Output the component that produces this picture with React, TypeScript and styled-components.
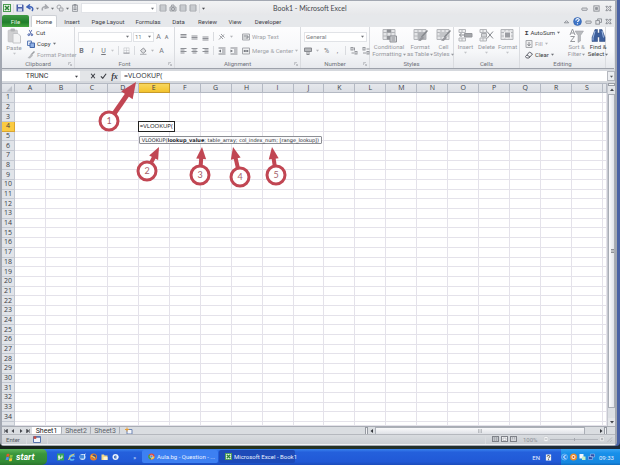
import React from "react";
import styled, { createGlobalStyle, css } from "styled-components";

const Global = createGlobalStyle`
  * { box-sizing: border-box; }
  html, body { margin: 0; height: 100%; }
  body { font-family: Roboto, "Noto Sans", sans-serif; font-size: 6px; color: #3f4147; overflow: hidden; }
  button, input, select { font: inherit; color: inherit; margin: 0; }
  button { background: none; border: 0; padding: 0; display: inline-flex; align-items: center; white-space: nowrap; }
  svg { display: block; flex: none; }
`;

const Desktop = styled.div`
  position: relative;
  height: 100vh;
  display: flex;
  flex-direction: column;
  background: linear-gradient(90deg, #15231a, #26331c 40%, #1c2a3c);
`;
const Window = styled.main`
  flex: 1;
  min-height: 0;
  margin-bottom: 3px;
  display: flex;
  flex-direction: column;
  background: #dfe2e6;
  border: solid #a3a8b2;
  border-width: 1px 2px 1px 2px;
  border-radius: 0 0 4px 4px;
  box-shadow: 3px 0 0 #4a62a4;
  margin-right: 3px;
`;
const TitleBar = styled.header`
  flex: none;
  height: 14px;
  display: grid;
  grid-template-columns: 210px 1fr 45px;
  align-items: center;
  background: linear-gradient(#f2f3f4, #e6e7ea);
`;
const QuickBar = styled.div`
  display: flex;
  align-items: center;
  gap: 2px;
  padding-left: 1px;
`;
const Title = styled.h1`
  margin: 0 0 0 61px;
  font-family: Lato, sans-serif;
  font-size: 7px;
  line-height: 12px;
  font-weight: 400;
  color: #45474c;
  white-space: nowrap;
`;
const Controls = styled.div<{ $gap: number }>`
  display: flex;
  align-items: center;
  justify-content: flex-end;
  gap: ${(p) => p.$gap}px;
  padding-right: 3px;
`;
const TabRow = styled.nav`
  flex: none;
  height: 12px;
  display: flex;
  align-items: stretch;
  background: #e6e8eb;
`;
const Tab = styled.button<{ $w: number; $kind?: "file" | "active" }>`
  width: ${(p) => p.$w}px;
  justify-content: center;
  color: #3f4147;
  ${(p) => p.$kind === "file" && css`
    color: #e8f6e4;
    background: linear-gradient(#3f9a45, #1f7d2b 60%, #43a63d);
    border-radius: 2px 2px 0 0;
  `}
  ${(p) => p.$kind === "active" && css`
    background: #fff;
    border: 1px solid #cdd0d5;
    border-bottom: 0;
    border-radius: 2px 2px 0 0;
    margin: 0 2px;
  `}
`;
const Spacer = styled.div`
  flex: 1;
`;
const Ribbon = styled.section`
  flex: none;
  height: 42px;
  display: flex;
  background: linear-gradient(#fdfdfe, #f6f7f9 60%, #e7e9ed);
  border-bottom: 1px solid #9da1aa;
  margin-right: 1px;
`;
const GroupBox = styled.section<{ $w: number }>`
  width: ${(p) => p.$w}px;
  flex: none;
  display: flex;
  flex-direction: column;
  border-right: 1px solid #dadce0;
`;
const GroupBody = styled.div<{ $pad: number }>`
  height: 33px;
  display: flex;
  align-items: center;
  padding: 0 ${(p) => p.$pad}px;
  gap: 4px;
`;
const GroupLabel = styled.footer`
  position: relative;
  height: 8px;
  line-height: 7px;
  text-align: center;
  color: #6f7279;
`;
const Launcher = styled.button`
  position: absolute;
  right: 2px;
  top: 2px;
`;
const Stack = styled.div`
  display: flex;
  flex-direction: column;
  gap: 4px;
`;
const Line = styled.div<{ $gap?: number }>`
  display: flex;
  align-items: center;
  height: 10px;
  gap: ${(p) => p.$gap ?? 4}px;
`;
const Command = styled.button<{ $off?: boolean }>`
  gap: 2px;
  height: 7px;
  line-height: 7px;
  color: ${(p) => (p.$off ? "#a0a2a7" : "#3a3c42")};
`;
const BigCommand = styled.button<{ $on?: boolean; $w: number }>`
  width: ${(p) => p.$w}px;
  height: 31px;
  flex: none;
  flex-direction: column;
  line-height: 6px;
  gap: 1px;
  color: ${(p) => (p.$on ? "#3a3c42" : "#96989e")};
`;
const MenuText = styled.span`
  display: inline-flex;
  align-items: center;
  gap: 1px;
`;
const Letter = styled.button<{ $look?: "b" | "i" | "u" }>`
  width: 7px;
  justify-content: center;
  color: #75777d;
  font-size: 7px;
  font-weight: ${(p) => (p.$look === "b" ? 700 : 400)};
  font-style: ${(p) => (p.$look === "i" ? "italic" : "normal")};
  text-decoration: ${(p) => (p.$look === "u" ? "underline" : "none")};
`;
const FxLetter = styled(Letter)`
  font-family: "Liberation Serif", serif;
  font-weight: 700;
  font-size: 8px;
  color: #33353b;
`;
const Combo = styled.div<{ $w: number }>`
  display: flex;
  align-items: center;
  width: ${(p) => p.$w}px;
  height: 10px;
  background: #fff;
  border: 1px solid #e1e3e7;
  padding-right: 2px;
  color: #7d7f85;
`;
const Pick = styled.select`
  appearance: none;
  flex: 1;
  min-width: 0;
  border: 0;
  padding: 0 1px;
  background: transparent;
  line-height: 8px;
`;
const Rule = styled.span`
  width: 1px;
  height: 9px;
  background: #d9dbdf;
`;
const FormulaBar = styled.div`
  flex: none;
  display: flex;
  height: 14px;
  padding: 2px 0;
  background: #d5d8dd;
`;
const NameBox = styled.input`
  width: 70px;
  border: 0;
  padding: 0;
  font-size: 7px;
  text-align: center;
  background: #fff;
  color: #35373c;
`;
const NameDrop = styled.button`
  width: 8px;
  justify-content: center;
  background: #fff;
`;
const FxButtons = styled.div`
  width: 41px;
  display: flex;
  align-items: center;
  justify-content: flex-end;
  gap: 4px;
  padding-right: 3px;
  background: #e3e5e8;
`;
const FormulaInput = styled.input`
  flex: 1;
  border: 0;
  padding: 0 3px;
  font-family: "Open Sans", sans-serif;
  font-size: 7px;
  line-height: 10px;
  background: #fff;
  color: #2b2d33;
`;
const ExpandButton = styled.button`
  width: 8px;
  justify-content: center;
  background: #eceef1;
  border: 1px solid #b5b8bf;
`;
const SheetArea = styled.div`
  flex: 1;
  min-height: 0;
  display: flex;
`;
const Grid = styled.table`
  flex: 1;
  min-width: 0;
  display: grid;
  grid-template-columns: 13px repeat(19, minmax(0, 1fr)) 4px;
  grid-template-rows: 10px repeat(34, minmax(0, 1fr)) 4px;
  background: #fff;
  thead, tbody, tr { display: contents; }
`;
const headCell = css`
  padding: 0;
  display: flex;
  align-items: center;
  justify-content: center;
  min-width: 0;
  min-height: 0;
  overflow: hidden;
  font-family: "Open Sans", sans-serif;
  font-size: 7px;
  font-weight: 400;
  line-height: 8px;
  color: #3b3e45;
`;
const ColHead = styled.th<{ $on?: boolean }>`
  ${headCell}
  background: ${(p) => (p.$on ? "linear-gradient(#f8d75e, #f3c32c)" : "linear-gradient(#e6e8ec, #dbdee4)")};
  border: solid ${(p) => (p.$on ? "#c69a2c" : "#b4b9c3")};
  border-width: 1px 1px 1px 0;
`;
const RowHead = styled.th<{ $on?: boolean }>`
  ${headCell}
  background: ${(p) => (p.$on ? "#fbcb41" : "#e1e4e9")};
  border: solid ${(p) => (p.$on ? "#d9a531" : "#c3c8d1")};
  border-width: 0 1px 1px 0;
`;
const Cell = styled.td`
  padding: 0;
  min-width: 0;
  min-height: 0;
  border: solid #e4e2ea;
  border-width: 0 1px 1px 0;
  position: relative;
`;
const EditBox = styled.div`
  position: absolute;
  z-index: 1;
  left: -1px;
  top: -1px;
  width: 37px;
  height: 11px;
  border: 1px solid #222;
  background: #fff;
  font-family: "Open Sans", sans-serif;
  font-size: 6px;
  line-height: 9px;
  padding-left: 1px;
  color: #111;
  white-space: nowrap;
`;
const Hint = styled.div`
  position: absolute;
  z-index: 1;
  left: 0;
  top: 14px;
  height: 8px;
  padding: 0 2px;
  border: 1px solid #8d8f95;
  border-radius: 1px;
  background: #fbfbfc;
  font-family: "DejaVu Sans", sans-serif;
  font-size: 5px;
  line-height: 6px;
  color: #24262c;
  white-space: nowrap;
`;
const VScroll = styled.div`
  width: 8px;
  flex: none;
  display: flex;
  flex-direction: column;
  background: #e4e6ea;
  border-left: 1px solid #c5c8cf;
`;
const Split = styled.div`
  height: 3px;
  border: 1px solid #9a9ea6;
  background: #f5f6f7;
`;
const ScrollButton = styled.button<{ $s: number }>`
  height: ${(p) => p.$s}px;
  min-width: 7px;
  justify-content: center;
`;
const VThumb = styled.div`
  flex: 1;
  display: grid;
  place-items: center;
  background: linear-gradient(90deg, #fbfbfd, #e3e5ec);
  border: 1px solid #a9adb6;
`;
const VTrack = styled.div`
  height: 10px;
  background: #dcdfe4;
`;
const BottomBar = styled.div`
  flex: none;
  height: 8px;
  display: grid;
  grid-template-columns: 362px 1fr;
  background: #dadde1;
  border-top: 1px solid #a9adb5;
`;
const SheetTabs = styled.nav`
  display: flex;
  align-items: stretch;
`;
const NavButtons = styled.div`
  width: 30px;
  display: flex;
  align-items: center;
  justify-content: space-around;
`;
const SheetTab = styled.button<{ $on?: boolean }>`
  width: ${(p) => (p.$on ? 30 : 29)}px;
  justify-content: center;
  font-size: 7px;
  line-height: 7px;
  color: ${(p) => (p.$on ? "#222" : "#60636a")};
  background: ${(p) => (p.$on ? "#fff" : "transparent")};
  border-right: 1px solid #a9adb5;
  border-radius: 0 0 3px 0;
`;
const NewTab = styled.button`
  width: 18px;
  justify-content: center;
`;
const HScroll = styled.div`
  display: flex;
  align-items: stretch;
  padding: 0 8px 0 1px;
`;
const HThumb = styled.div`
  flex: 1;
  display: grid;
  place-items: center;
  border: 1px solid #abafb7;
  background: linear-gradient(#fafafb, #dfe1e6);
`;
const HTrack = styled.div`
  width: 12px;
`;
const HSplit = styled.div`
  width: 3px;
  border: 1px solid #969aa2;
  background: #f2f3f5;
`;
const StatusBar = styled.footer`
  flex: none;
  height: 11px;
  display: flex;
  align-items: center;
  gap: 6px;
  padding: 0 2px 1px 4px;
  background: linear-gradient(#d9dce0, #c9cdd2);
  border-top: 1px solid #b5b8be;
  border-bottom: 1px solid #f2f3f4;
  color: #595c63;
`;
const Zoom = styled.input`
  appearance: none;
  width: 48px;
  height: 1px;
  background: #b4b7bd;
  &::-webkit-slider-thumb { appearance: none; width: 1px; height: 3px; background: #a4a7ae; }
`;
const ZoomRow = styled.div`
  display: flex;
  align-items: center;
  gap: 1px;
`;
const ViewRow = styled(ZoomRow)`
  gap: 2px;
`;
const Zooms = styled.span`
  width: 19px;
  color: #8d9096;
`;
const Taskbar = styled.nav`
  flex: none;
  height: 16px;
  display: flex;
  align-items: stretch;
  background: linear-gradient(#3a82ee, #2460dc 20%, #2159d6 80%, #1b4cba);
  color: #e8f0ff;
`;
const Start = styled.button`
  width: 47px;
  padding-left: 5px;
  gap: 2px;
  border-radius: 0 5px 5px 0;
  background: linear-gradient(#5cb55a, #3a963c 30%, #338b35 80%, #2a742c);
  color: #fff;
  font-size: 9px;
  line-height: 12px;
  font-weight: 700;
  font-style: italic;
`;
const Launch = styled.div`
  width: 95px;
  display: flex;
  align-items: center;
  gap: 4px;
  padding: 0 6px 0 10px;
`;
const Task = styled.button<{ $on?: boolean }>`
  width: 76px;
  margin: 1px 1px 2px 0;
  padding-left: 6px;
  gap: 2px;
  border-radius: 2px;
  background: ${(p) => (p.$on ? "#1d4ab8" : "#3d80f2")};
`;
const Lang = styled.div`
  display: flex;
  align-items: center;
  gap: 5px;
  padding-right: 9px;
`;
const Tray = styled.div`
  width: 59px;
  display: flex;
  align-items: center;
  gap: 2px;
  background: linear-gradient(#3aa6f4, #1890ea 25%, #1587e0 85%, #106dc0);
`;
const Clock = styled.time`
  margin-left: 2px;
`;
const Callouts = styled.svg`
  position: absolute;
  left: 0;
  top: 0;
  z-index: 3;
  pointer-events: none;
`;

type Draw = { w?: number; h?: number; box?: string; children: React.ReactNode };
const Svg = ({ w = 8, h = 8, box = "0 0 16 16", children }: Draw) => (
  <svg width={w} height={h} viewBox={box} fill="none" aria-hidden="true">{children}</svg>
);
const Arrow = ({ c = "#6d7076", dir = "down", s = 3 }: { c?: string; dir?: "down" | "up" | "left" | "right"; s?: number }) => {
  const d = { down: "M0 2h8L4 7z", up: "M0 6h8L4 1z", left: "M6 0v8L1 4z", right: "M2 0v8l5-4z" }[dir];
  return <Svg w={s} h={s} box="0 0 8 8"><path d={d} fill={c} /></Svg>;
};
const ExcelIcon = ({ s = 8 }: { s?: number }) => (
  <Svg w={s} h={s}>
    <rect x="1" y="1" width="14" height="14" fill="#e7f3e4" stroke="#4b9b50" strokeWidth="2" />
    <path d="M4 4l8 8M12 4l-8 8" stroke="#2c8436" strokeWidth="3" />
  </Svg>
);
const SaveIcon = () => (
  <Svg><path d="M1 1h13l1 1v13H1z" fill="#4b5fa8" /><rect x="4" y="1" width="8" height="5" fill="#e9edf8" /><rect x="4" y="9" width="8" height="6" fill="#c7cfe8" /></Svg>
);
const UndoIcon = ({ c = "#3f62b8", flip = false }: { c?: string; flip?: boolean }) => (
  <Svg><path d={flip ? "M3 13C1 7 6 4 11 6M8 1l6 6-7 2" : "M12 14C16 8 11 4 5 6M8 1L2 6l7 4"} stroke={c} strokeWidth="3" /></Svg>
);
const SheetIcon = ({ lines = false }: { lines?: boolean }) => (
  <Svg>
    <path d={lines ? "M2 2h12v12H2z" : "M3 2h10v13H3z"} fill="#dcdee1" stroke="#a3a6ab" strokeWidth="2" />
    <path d={lines ? "M2 6h12M2 10h12" : "M6 1h4v3H6zM5 8h6M5 11h6"} stroke="#8f9298" strokeWidth={lines ? 1 : 2} />
  </Svg>
);
const ShapesIcon = () => (
  <Svg><circle cx="6" cy="6" r="4" stroke="#a6a8ad" strokeWidth="2" /><path d="M7 8h7v6H7z" fill="#e0e2e5" stroke="#a6a8ad" strokeWidth="2" /></Svg>
);
const CameraIcon = () => (
  <Svg><path d="M2 6h12v8H2zM5 6V2h5v4" fill="#d9dbde" stroke="#a0a3a8" strokeWidth="2" /><circle cx="8" cy="10" r="3" stroke="#8f9298" strokeWidth="2" /></Svg>
);
const WinIcon = ({ kind }: { kind: "min" | "max" | "close" | "restore" | "up" }) => (
  <Svg w={7} h={7}>
    {kind === "min" && <rect x="2" y="7" width="12" height="5" rx="1" stroke="#85888f" strokeWidth="2" />}
    {kind === "max" && <><rect x="2" y="2" width="12" height="12" stroke="#85888f" strokeWidth="2" /><rect x="6" y="6" width="4" height="4" stroke="#85888f" strokeWidth="2" /></>}
    {kind === "close" && <path d="M2 3h4l2 3 2-3h4l-3 5 3 5h-4l-2-3-2 3H2l3-5z" stroke="#85888f" strokeWidth="2" />}
    {kind === "restore" && <><path d="M6 5V2h9v8h-4" stroke="#85888f" strokeWidth="2" /><rect x="2" y="6" width="8" height="8" stroke="#85888f" strokeWidth="2" /></>}
    {kind === "up" && <path d="M3 11l5-5 5 5z" stroke="#85888f" strokeWidth="2" />}
  </Svg>
);
const HelpIcon = () => (
  <Svg w={9} h={9}><circle cx="8" cy="8" r="7" fill="#3f76c8" stroke="#2b5aa8" /><path d="M5 6c0-4 6-4 6-1 0 2-3 2-3 4M8 11v2" stroke="#fff" strokeWidth="2" /></Svg>
);
const PasteIcon = () => (
  <Svg w={14} h={16} box="0 0 28 32"><rect x="2" y="4" width="19" height="24" rx="2" fill="#cfcfd1" stroke="#b9babd" /><rect x="7" y="1" width="9" height="6" rx="2" fill="#b2b3b6" /><path d="M12 11h10l5 5v14H12z" fill="#f3f3f4" stroke="#c3c4c7" strokeWidth="2" /></Svg>
);
const CutIcon = () => (
  <Svg w={7} h={8}><path d="M5 1l5 10M11 1L6 11" stroke="#5a6fae" strokeWidth="2" /><circle cx="4" cy="12" r="2" stroke="#3450a0" strokeWidth="2" /><circle cx="11" cy="12" r="2" stroke="#3450a0" strokeWidth="2" /></Svg>
);
const CopyIcon = () => (
  <Svg><path d="M1 2h8v9H1z" fill="#dfe8f7" stroke="#5f7fb8" strokeWidth="2" /><path d="M6 6h9v9H6z" fill="#8fb0e4" stroke="#4467a8" strokeWidth="2" /></Svg>
);
const BrushIcon = () => (
  <Svg><path d="M15 1L8 8" stroke="#9c9fa4" strokeWidth="3" /><path d="M9 6l3 3-6 6-5-1z" fill="#b5b7bb" /></Svg>
);
const LinesIcon = ({ rows, c = "#8e9096" }: { rows: number[][]; c?: string }) => (
  <Svg w={7} h={8} box="0 0 14 16">{rows.map((r, i) => <path key={i} d={`M${r[1]} ${r[0]}h${r[2]}`} stroke={c} strokeWidth="2" />)}</Svg>
);
const TableIcon = ({ kind }: { kind: string }) => (
  <Svg w={15} h={15} box="0 0 30 30">
    <path d="M2 3h24v20H2z" fill="#e4e5e7" stroke="#b4b6ba" strokeWidth="2" />
    <path d="M2 9h24M2 16h24M10 3v20M18 3v20" stroke="#b4b6ba" strokeWidth="2" />
    {kind === "cond" && <><path d="M10 3h8v6h-8zM10 16h8v7h-8z" fill="#8f9196" /><path d="M16 16h13v12H16z" fill="#d3d5d8" stroke="#8f9196" strokeWidth="2" /><path d="M19 20h7M19 24h7" stroke="#8f9196" strokeWidth="2" /></>}
    {kind === "table" && <><path d="M10 9h16v14H10z" fill="#b0b2b6" /><path d="M29 5L17 18" stroke="#85888d" strokeWidth="3" /><path d="M19 16l3 4-7 6-5-1z" fill="#94969b" /></>}
    {kind === "style" && <><path d="M7 8h14v10H7z" fill="#c3c5c8" /><path d="M29 5L17 18" stroke="#85888d" strokeWidth="3" /><path d="M19 16l3 4-7 6-5-1z" fill="#94969b" /></>}
    {kind === "format" && <path d="M9 8h12v12H9z" fill="#9b9da2" stroke="#f2f2f3" strokeWidth="2" />}
  </Svg>
);
const CellOpIcon = ({ del = false }: { del?: boolean }) => (
  <Svg w={15} h={15} box="0 0 30 30">
    <path d="M2 3h13v6H2zM2 20h13v6H2zM8 3v6M8 20v6" fill="#eeeff0" stroke="#b4b6ba" strokeWidth="2" />
    {del
      ? <><path d="M5 11h10v7H5z" fill="#d3d5d8" stroke="#a9abaf" strokeWidth="2" /><path d="M16 7l12 14M28 7L16 21" stroke="#85888d" strokeWidth="2" /></>
      : <><path d="M13 11h15v7H13z" fill="#a4a6aa" stroke="#94969b" strokeWidth="2" /><path d="M12 14H3m4-4l-4 4 4 4" stroke="#85888d" strokeWidth="2" /></>}
  </Svg>
);
const SortIcon = () => (
  <Svg w={15} h={15} box="0 0 30 30"><path d="M2 14L7 2l5 12M4 10h6M3 17h8L3 27h9" stroke="#96989d" strokeWidth="2" /><path d="M12 6h17l-6 9v11l-5 3V15z" fill="#b9bbbe" stroke="#999ba0" /></Svg>
);
const FindIcon = () => (
  <Svg w={15} h={15} box="0 0 30 30">
    <path d="M8 3h5v7h4V3h5l6 16v8H17v-9h-4v9H2v-8z" fill="#3d5f9c" stroke="#2b477c" />
    <path d="M8 6L4 20v5M22 6l3 13" stroke="#a2bce6" strokeWidth="2" />
  </Svg>
);
const FillIcon = () => (
  <Svg><path d="M2 1h12v14H2z" fill="#ededee" stroke="#a8aaae" strokeWidth="2" /><path d="M8 4v7M5 8l3 4 3-4" stroke="#8c8e93" strokeWidth="2" /></Svg>
);
const EraserIcon = () => (
  <Svg><path d="M9 2l6 4-7 8H3l-2-3z" fill="#f4f4f6" stroke="#62656d" strokeWidth="2" /><path d="M4 8l6 4" stroke="#62656d" strokeWidth="2" /></Svg>
);
const WrapIcon = ({ merge = false }: { merge?: boolean }) => (
  <Svg><path d="M1 2h14v12H1z" fill="#eeeff0" stroke="#a6a8ad" strokeWidth="2" /><path d={merge ? "M3 8h10M5 6v4M11 6v4M6 8h4" : "M3 6h9v4H7M3 10h2"} stroke="#7d8086" strokeWidth="2" /></Svg>
);
const BorderIcon = () => (
  <Svg w={7} h={7}><path d="M2 2h12v12H2zM8 2v12M2 8h12" stroke="#b3b5b9" strokeWidth="1" /><path d="M1 14h14" stroke="#8c8e93" strokeWidth="2" /></Svg>
);
const BucketIcon = () => (
  <Svg><path d="M3 7l6-5 5 6-6 5z" fill="#e0e1e3" stroke="#94969b" strokeWidth="2" /><path d="M2 15h13" stroke="#b9bbbf" strokeWidth="3" /></Svg>
);
const IndentIcon = ({ out = false }: { out?: boolean }) => (
  <Svg><path d="M1 2h14M8 6h7M8 10h7M1 14h14" stroke="#85878d" strokeWidth="2" /><path d={out ? "M6 5L1 8l5 3z" : "M1 5l5 3-5 3z"} fill="#6f7278" /></Svg>
);
const AngleIcon = () => (
  <Svg><path d="M2 13L12 3M3 5l7 7M6 2l7 7" stroke="#9a9ca1" strokeWidth="2" /></Svg>
);
const MoneyIcon = () => (
  <Svg><path d="M1 2h14v7H1z" fill="#b5b7bb" stroke="#898b90" strokeWidth="2" /><path d="M4 12h8M5 15h6" stroke="#898b90" strokeWidth="2" /></Svg>
);
const DecimalIcon = ({ less = false }: { less?: boolean }) => (
  <Svg><rect x="2" y="1" width="4" height="5" stroke="#96989d" strokeWidth="2" /><rect x="10" y="9" width="4" height="5" stroke="#96989d" strokeWidth="2" /><path d={less ? "M2 12h6M9 4h6" : "M3 12h5M9 1v6"} stroke="#96989d" strokeWidth="2" /></Svg>
);
const LaunchIcon = () => (
  <Svg w={4} h={4} box="0 0 8 8"><path d="M1 6V1h5M3 3l4 4M7 4v3H4" stroke="#9a9da3" /></Svg>
);
const CrossIcon = () => <Svg w={6} h={6}><path d="M3 2l10 12M13 2L3 14" stroke="#3a3c42" strokeWidth="3" /></Svg>;
const CheckIcon = () => <Svg w={7} h={6}><path d="M1 9l5 5 9-12" stroke="#3a3c42" strokeWidth="3" /></Svg>;
const NewSheetIcon = () => (
  <Svg><path d="M4 5h10v9H4z" fill="#f4f6fb" stroke="#6f86b4" strokeWidth="2" /><path d="M4 1v8M0 5h8" stroke="#e59c35" strokeWidth="2" /></Svg>
);
const MacroIcon = () => (
  <Svg><path d="M1 3h14v12H1z" fill="#f2f5fb" stroke="#5874ae" strokeWidth="2" /><path d="M1 4h14" stroke="#5874ae" strokeWidth="3" /><circle cx="4" cy="5" r="3" fill="#c44d43" /></Svg>
);
const ViewIcon = ({ kind }: { kind: number }) => (
  <Svg w={7} h={6} box="0 0 14 12"><rect x="1" y="1" width="12" height="10" fill={kind === 1 ? "#f6f6f7" : "#d4d6da"} stroke="#7e8188" strokeWidth="2" /><path d={kind === 0 ? "M1 4h12M1 8h12M5 1v10M9 1v10" : kind === 1 ? "M4 4h6v5H4z" : "M5 1v6M9 1v6"} stroke="#8f9298" /></Svg>
);
const Flag = () => (
  <Svg w={9} h={9}>
    <path d="M3 2c2-1 3-1 5 0L7 7C5 6 4 6 2 7z" fill="#e8582c" /><path d="M9 3c2 1 3 1 5 0l-1 5c-2 1-3 1-5 0z" fill="#86c440" />
    <path d="M2 8c2-1 3-1 5 0l-1 5c-2-1-3-1-5 0z" fill="#4f8ff0" /><path d="M8 9c2 1 3 1 5 0l-1 5c-2 1-3 1-5 0z" fill="#f7c92e" />
  </Svg>
);
const Chrome = () => (
  <Svg w={7} h={7}><circle cx="8" cy="8" r="7" fill="#e2493b" /><path d="M8 8L2 4a7 7 0 0 0 4 11z" fill="#39a650" /><path d="M8 8h7a7 7 0 0 1-8 7z" fill="#f5cb3c" /><circle cx="8" cy="8" r="3" fill="#4a86e0" stroke="#fff" /></Svg>
);
const QuickIcon = ({ k }: { k: number }) => (
  <Svg w={7} h={8} box="0 0 14 16">
    {k === 0 && <><rect x="0" y="1" width="14" height="14" fill="#38a55a" /><path d="M4 5v9M4 5v5h6V5" stroke="#fff" strokeWidth="2" /></>}
    {k === 1 && <><path d="M12 12a5 5 0 1 1 0-6H4" stroke="#5fb8f5" strokeWidth="3" /><path d="M1 14C3 8 8 3 13 2" stroke="#f0cf54" strokeWidth="2" /></>}
    {k === 2 && <><circle cx="7" cy="8" r="6" fill="#cfe4fa" /><path d="M2 4h8v7H2z" fill="#468bdc" /><path d="M10 4l3-2" stroke="#fff" strokeWidth="2" /></>}
    {k === 3 && <><circle cx="7" cy="8" r="7" fill="#e87b28" /><circle cx="8" cy="7" r="4" fill="#33539c" /><path d="M2 6c3 0 4 2 8 4" stroke="#f7c050" strokeWidth="3" /></>}
    {k === 4 && <><path d="M1 3h5l1 2h6v9H1z" fill="#f3d98a" /><path d="M5 8h8v6H5z" fill="#fdf3cf" /></>}
    {k === 5 && <><circle cx="7" cy="8" r="6" fill="#e9f1fc" /><circle cx="7" cy="8" r="3" fill="#285fb8" /><path d="M7 8h6" stroke="#fff" strokeWidth="2" /></>}
  </Svg>
);
const TrayIcon = ({ k }: { k: number }) => (
  <Svg w={7} h={8} box="0 0 14 16">
    {k === 0 && <><circle cx="7" cy="8" r="6" fill="#2d8ef0" stroke="#a8d4fb" /><path d="M9 4L5 8l4 4" stroke="#fff" strokeWidth="2" /></>}
    {k === 1 && <><circle cx="7" cy="8" r="7" fill="#e98b2c" /><circle cx="7" cy="8" r="4" fill="#fff2d8" /><circle cx="7" cy="8" r="2" fill="#d0552c" /></>}
    {k === 2 && <><path d="M1 2h8v9H1z" fill="#f2f8ff" /><path d="M6 7h7v7H6z" fill="#c9eec5" /></>}
    {k === 3 && <><path d="M5 2h8v6H5zM1 7h8v6H1z" fill="#2d4ea8" stroke="#b8cdf4" /></>}
  </Svg>
);

type GroupProps = { w: number; label: string; pad?: number; launch?: boolean; children: React.ReactNode };
const Group = ({ w, label, pad = 5, launch, children }: GroupProps) => (
  <GroupBox $w={w} aria-label={label}>
    <GroupBody $pad={pad}>{children}</GroupBody>
    <GroupLabel>{label}{launch && <Launcher aria-label={`${label} options`}><LaunchIcon /></Launcher>}</GroupLabel>
  </GroupBox>
);

const tabs: [string, number][] = [["Insert", 26], ["Page Layout", 46], ["Formulas", 34], ["Data", 27], ["Review", 31], ["View", 24], ["Developer", 42]];
const columns = "ABCDEFGHIJKLMNOPQRS".split("");
const rows = Array.from({ length: 34 }, (_, i) => i + 1);

const callouts = [
  { n: 1, x: 109, y: 121, tip: [136, 82], w: 5 },
  { n: 2, x: 147, y: 171, tip: [159, 147], w: 4 },
  { n: 3, x: 200, y: 175, tip: [202, 147], w: 4 },
  { n: 4, x: 240, y: 177, tip: [233, 147], w: 4 },
  { n: 5, x: 276, y: 175, tip: [272, 147], w: 4 },
];

const Pointers = () => (
  <Callouts width="320" height="200" viewBox="0 0 320 200" fill="none" aria-hidden="true">
    {callouts.map(({ n, x, y, tip, w }) => {
      const dx = tip[0] - x, dy = tip[1] - y, len = Math.hypot(dx, dy);
      const ux = dx / len, uy = dy / len;
      const hl = n === 1 ? 16 : 12, hw = n === 1 ? 7 : 5;
      const bx = tip[0] - ux * hl, by = tip[1] - uy * hl;
      return (
        <g key={n}>
          <path d={`M${x + ux * 9} ${y + uy * 9}L${bx + ux} ${by + uy}`} stroke="#c14653" strokeWidth={w} />
          <path d={`M${tip[0]} ${tip[1]}L${bx - uy * hw} ${by + ux * hw}L${bx + uy * hw} ${by - ux * hw}z`} fill="#c14653" />
          <circle cx={x} cy={y} r="9" fill="#fff" stroke="#c14653" strokeWidth="3" />
          <text x={x} y={y + 3} textAnchor="middle" fontFamily="Lato, sans-serif" fontSize="9" fill="#a5606a">{n}</text>
        </g>
      );
    })}
  </Callouts>
);

export default function App() {
  return (
    <Desktop>
      <Global />
      <Window>
        <TitleBar>
          <QuickBar>
            <ExcelIcon />
            <Rule />
            <SaveIcon />
            <UndoIcon />
            <Arrow />
            <UndoIcon c="#a6a8ad" flip />
            <Arrow />
            <ShapesIcon />
            <Arrow />
            <SheetIcon />
            <Combo $w={76}><Pick aria-label="Recent font" /><Arrow /></Combo>
            <SheetIcon lines /><CameraIcon /><SheetIcon lines /><SheetIcon lines />
            <Rule />
            <Arrow c="#44464c" />
          </QuickBar>
          <Title>Book1 - Microsoft Excel</Title>
          <Controls $gap={5}>
            <button aria-label="Minimize"><WinIcon kind="min" /></button>
            <button aria-label="Maximize"><WinIcon kind="max" /></button>
            <button aria-label="Close"><WinIcon kind="close" /></button>
          </Controls>
        </TitleBar>
        <TabRow>
          <Tab $w={27} $kind="file">File</Tab>
          <Tab $w={26} $kind="active">Home</Tab>
          {tabs.map(([t, w]) => <Tab key={t} $w={w}>{t}</Tab>)}
          <Spacer />
          <Controls $gap={3}>
            <button aria-label="Collapse ribbon"><WinIcon kind="up" /></button>
            <button aria-label="Help"><HelpIcon /></button>
            <button aria-label="Minimize workbook"><WinIcon kind="min" /></button>
            <button aria-label="Restore workbook"><WinIcon kind="restore" /></button>
            <button aria-label="Close workbook"><WinIcon kind="close" /></button>
          </Controls>
        </TabRow>
        <Ribbon>
          <Group w={73} pad={3} label="Clipboard" launch>
            <BigCommand $w={18}><PasteIcon />Paste<Arrow c="#c3c5c9" s={3} /></BigCommand>
            <Stack>
              <Command><CutIcon />Cut</Command>
              <Command><CopyIcon />Copy <Arrow /></Command>
              <Command $off><BrushIcon />Format Painter</Command>
            </Stack>
          </Group>
          <Group w={100} pad={3} label="Font" launch>
            <Stack>
              <Line $gap={1}>
                <Combo $w={54}><Pick aria-label="Font" /><Arrow /></Combo>
                <Combo $w={21}><Pick aria-label="Font size"><option>11</option></Pick><Arrow /></Combo>
                <Letter>A</Letter><Letter>ᴀ</Letter>
              </Line>
              <Line>
                <Letter $look="b">B</Letter><Letter $look="i">I</Letter><Letter $look="u">U</Letter><Arrow c="#c3c5c9" />
                <Rule /><BorderIcon /><Rule /><BucketIcon /><Arrow c="#b3b5b9" /><Letter>A</Letter>
              </Line>
            </Stack>
          </Group>
          <Group w={126} label="Alignment" launch>
            <Stack>
              <Line>
                <LinesIcon rows={[[3, 1, 12], [6, 1, 12], [9, 1, 12]]} />
                <LinesIcon rows={[[6, 1, 12], [9, 1, 12], [12, 1, 12]]} />
                <LinesIcon rows={[[8, 1, 12], [11, 1, 12], [14, 1, 12]]} />
                <Rule /><AngleIcon /><Arrow c="#b3b5b9" />
              </Line>
              <Line>
                <LinesIcon rows={[[3, 1, 12], [6, 1, 8], [9, 1, 12], [12, 1, 8]]} />
                <LinesIcon rows={[[3, 1, 12], [6, 3, 8], [9, 1, 12], [12, 3, 8]]} />
                <LinesIcon rows={[[3, 1, 12], [6, 5, 8], [9, 1, 12], [12, 5, 8]]} />
                <Rule /><IndentIcon out /><IndentIcon />
              </Line>
            </Stack>
            <Stack>
              <Line><Command $off><WrapIcon />Wrap Text</Command></Line>
              <Line><Command $off><WrapIcon merge />Merge &amp; Center <Arrow c="#b3b5b9" /></Command></Line>
            </Stack>
          </Group>
          <Group w={69} pad={3} label="Number" launch>
            <Stack>
              <Line><Combo $w={63}><Pick aria-label="Number format"><option>General</option></Pick><Arrow /></Combo></Line>
              <Line>
                <MoneyIcon /><Arrow c="#b3b5b9" /><Letter>%</Letter><Letter>,</Letter><Rule /><DecimalIcon /><DecimalIcon less />
              </Line>
            </Stack>
          </Group>
          <Group w={84} pad={3} label="Styles">
            <BigCommand $w={32}><TableIcon kind="cond" /><span>Conditional</span><MenuText>Formatting<Arrow c="#96989e" /></MenuText></BigCommand>
            <BigCommand $w={22}><TableIcon kind="table" /><span>Format</span><MenuText>as Table<Arrow c="#96989e" /></MenuText></BigCommand>
            <BigCommand $w={17}><TableIcon kind="style" /><span>Cell</span><MenuText>Styles<Arrow c="#96989e" /></MenuText></BigCommand>
          </Group>
          <Group w={66} pad={3} label="Cells">
            <BigCommand $w={17}><CellOpIcon />Insert<Arrow c="#c3c5c9" /></BigCommand>
            <BigCommand $w={17}><CellOpIcon del />Delete<Arrow c="#c3c5c9" /></BigCommand>
            <BigCommand $w={17}><TableIcon kind="format" />Format<Arrow c="#c3c5c9" /></BigCommand>
          </Group>
          <Group w={86} label="Editing">
            <Stack>
              <Command><b>Σ</b> AutoSum <Arrow /></Command>
              <Command $off><FillIcon />Fill <Arrow c="#b3b5b9" /></Command>
              <Command><EraserIcon />Clear <Arrow /></Command>
            </Stack>
            <Spacer />
            <BigCommand $w={17}><SortIcon /><span>Sort &amp;</span><MenuText>Filter<Arrow c="#96989e" /></MenuText></BigCommand>
            <BigCommand $w={18} $on><FindIcon /><span>Find &amp;</span><MenuText>Select<Arrow /></MenuText></BigCommand>
          </Group>
        </Ribbon>
        <FormulaBar>
          <NameBox aria-label="Name box" defaultValue="TRUNC" />
          <NameDrop aria-label="Names"><Arrow c="#3a3c42" /></NameDrop>
          <FxButtons>
            <button aria-label="Cancel"><CrossIcon /></button>
            <button aria-label="Enter"><CheckIcon /></button>
            <FxLetter $look="i" aria-label="Insert function">fx</FxLetter>
          </FxButtons>
          <FormulaInput aria-label="Formula" defaultValue="=VLOOKUP(" />
          <ExpandButton aria-label="Expand formula bar"><Arrow c="#55585f" /></ExpandButton>
        </FormulaBar>
        <SheetArea>
          <Grid>
            <thead>
              <tr>
                <ColHead aria-label="Select all"><Svg w={9} h={7} box="0 0 18 14"><path d="M16 2v11H5z" fill="#bdc1c9" /></Svg></ColHead>
                {columns.map((c) => <ColHead key={c} scope="col" $on={c === "E"}>{c}</ColHead>)}
                <ColHead />
              </tr>
            </thead>
            <tbody>
              {rows.map((r) => (
                <tr key={r}>
                  <RowHead scope="row" $on={r === 4}>{r}</RowHead>
                  {columns.map((c) => (
                    <Cell key={c}>
                      {r === 4 && c === "E" && <>
                        <EditBox>=VLOOKUP(</EditBox>
                        <Hint>VLOOKUP(<b>lookup_value</b>; table_array; col_index_num; [range_lookup])</Hint>
                      </>}
                    </Cell>
                  ))}
                  <Cell />
                </tr>
              ))}
              <tr>
                <RowHead />
                {columns.map((c) => <Cell key={c} />)}
                <Cell />
              </tr>
            </tbody>
          </Grid>
          <VScroll>
            <Split />
            <ScrollButton $s={8} aria-label="Scroll up"><Arrow dir="up" c="#44464c" s={4} /></ScrollButton>
            <VThumb><LinesIcon rows={[[5, 4, 6], [8, 4, 6], [11, 4, 6]]} /></VThumb>
            <VTrack />
            <ScrollButton $s={8} aria-label="Scroll down"><Arrow c="#44464c" s={4} /></ScrollButton>
          </VScroll>
        </SheetArea>
        <BottomBar>
          <SheetTabs>
            <NavButtons>
              <button aria-label="First sheet"><Svg w={4} h={4} box="0 0 8 8"><path d="M1 0v8M7 0v8L2 4z" fill="#44464c" stroke="#44464c" /></Svg></button>
              <button aria-label="Previous sheet"><Arrow dir="left" c="#44464c" s={4} /></button>
              <button aria-label="Next sheet"><Arrow dir="right" c="#44464c" s={4} /></button>
              <button aria-label="Last sheet"><Svg w={4} h={4} box="0 0 8 8"><path d="M7 0v8M1 0v8l5-4z" fill="#44464c" stroke="#44464c" /></Svg></button>
            </NavButtons>
            <SheetTab $on>Sheet1</SheetTab>
            <SheetTab>Sheet2</SheetTab>
            <SheetTab>Sheet3</SheetTab>
            <NewTab aria-label="Insert sheet"><NewSheetIcon /></NewTab>
          </SheetTabs>
          <HScroll>
            <HSplit />
            <ScrollButton $s={7} aria-label="Scroll left"><Arrow dir="left" c="#33353b" s={4} /></ScrollButton>
            <HThumb><Svg w={4} h={4} box="0 0 8 8"><path d="M1 0v8M4 0v8M7 0v8" stroke="#8d9097" /></Svg></HThumb>
            <HTrack />
            <ScrollButton $s={7} aria-label="Scroll right"><Arrow dir="right" c="#33353b" s={4} /></ScrollButton>
            <HSplit />
          </HScroll>
        </BottomBar>
        <StatusBar>
          <span>Enter</span>
          <Rule />
          <MacroIcon />
          <Rule />
          <Spacer />
          <Rule />
          <ViewRow>
            <button aria-label="Normal view"><ViewIcon kind={0} /></button>
            <button aria-label="Page layout view"><ViewIcon kind={1} /></button>
            <button aria-label="Page break view"><ViewIcon kind={2} /></button>
          </ViewRow>
          <ZoomRow>
            <Zooms>100%</Zooms>
            <button aria-label="Zoom out"><Svg w={6} h={6}><circle cx="8" cy="8" r="7" fill="#f6f7f8" stroke="#b0b3b9" /><path d="M4 8h8" stroke="#8f9298" strokeWidth="2" /></Svg></button>
            <Zoom type="range" aria-label="Zoom" defaultValue={50} />
            <button aria-label="Zoom in"><Svg w={6} h={6}><circle cx="8" cy="8" r="7" fill="#f6f7f8" stroke="#b0b3b9" /><path d="M4 8h8M8 4v8" stroke="#8f9298" strokeWidth="2" /></Svg></button>
            <Svg w={7} h={7}><path d="M14 3L3 14M14 9l-5 5" stroke="#b3b6bc" strokeWidth="2" /></Svg>
          </ZoomRow>
        </StatusBar>
      </Window>
      <Taskbar>
        <Start><Flag />start</Start>
        <Launch>
          {[0, 1, 2, 3, 4, 5].map((k) => <QuickIcon key={k} k={k} />)}
          <Spacer /><span>»</span>
        </Launch>
        <Task><Chrome />Aula.bg - Question - ...</Task>
        <Task $on><ExcelIcon s={7} />Microsoft Excel - Book1</Task>
        <Spacer />
        <Lang><span>EN</span><Svg w={7} h={7}><path d="M2 1h12v14H2z" fill="#f2f2f2" /><path d="M5 6c0-4 6-3 6 0 0 2-3 2-3 4M8 12v2" stroke="#333" strokeWidth="2" /></Svg></Lang>
        <Tray>
          {[0, 1, 2, 3].map((k) => <TrayIcon key={k} k={k} />)}
          <Clock>09:33</Clock>
        </Tray>
      </Taskbar>
      <Pointers />
    </Desktop>
  );
}
